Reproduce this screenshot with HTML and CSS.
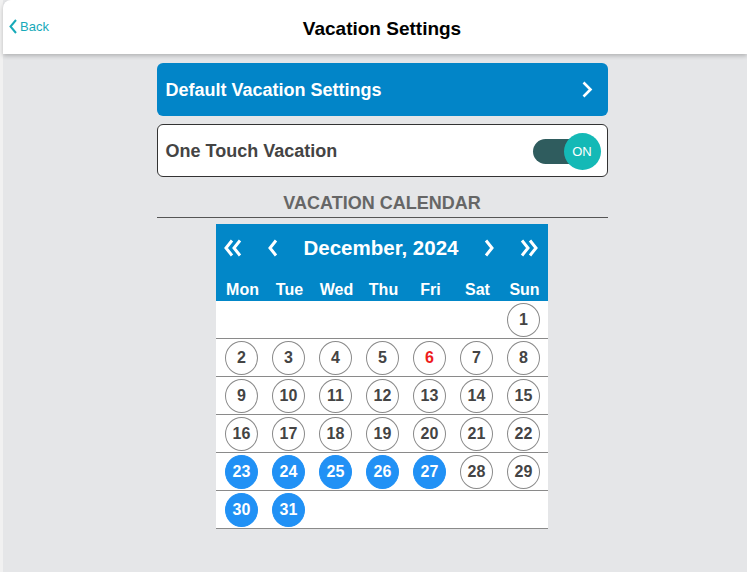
FILE: index.html
```html
<!DOCTYPE html>
<html lang="en">
<head>
<meta charset="utf-8">
<title>Vacation Settings</title>
<link rel="stylesheet" href="styles.css">
</head>
<body>
<div class="app">
  <header class="topbar">
    <a class="back" href="#">
      <svg class="back-icon" width="8" height="15" viewBox="0 0 8 15"><polyline points="7,1 1.5,7.5 7,14" fill="none" stroke="#17aab9" stroke-width="2"/></svg>
      <span>Back</span>
    </a>
    <h1 class="title">Vacation Settings</h1>
    <span class="spacer"></span>
  </header>

  <main class="content">
    <a class="nav-btn" href="#">
      <span>Default Vacation Settings</span>
      <svg width="12" height="17" viewBox="0 0 12 17"><polyline points="2.5,1.5 9.5,8.5 2.5,15.5" fill="none" stroke="#fff" stroke-width="2.6"/></svg>
    </a>

    <div class="toggle-row">
      <span>One Touch Vacation</span>
      <div class="switch">
        <span class="track"></span>
        <span class="knob">ON</span>
      </div>
    </div>

    <h2 class="section-title">VACATION CALENDAR</h2>

    <div class="calendar">
      <div class="cal-head">
        <div class="month-row">
          <svg width="18" height="18" viewBox="0 0 18 18"><polyline points="8,1.5 2,9 8,16.5" fill="none" stroke="#fff" stroke-width="3"/><polyline points="16,1.5 10,9 16,16.5" fill="none" stroke="#fff" stroke-width="3"/></svg>
          <svg width="11" height="18" viewBox="0 0 11 18"><polyline points="9,1.5 3,9 9,16.5" fill="none" stroke="#fff" stroke-width="3"/></svg>
          <span class="month">December, 2024</span>
          <svg width="11" height="18" viewBox="0 0 11 18"><polyline points="2,1.5 8,9 2,16.5" fill="none" stroke="#fff" stroke-width="3"/></svg>
          <svg width="18" height="18" viewBox="0 0 18 18"><polyline points="2,1.5 8,9 2,16.5" fill="none" stroke="#fff" stroke-width="3"/><polyline points="10,1.5 16,9 10,16.5" fill="none" stroke="#fff" stroke-width="3"/></svg>
        </div>
        <div class="week-row">
          <span>Mon</span><span>Tue</span><span>Wed</span><span>Thu</span><span>Fri</span><span>Sat</span><span>Sun</span>
        </div>
      </div>
      <div class="week">
        <span class="cell"></span><span class="cell"></span><span class="cell"></span><span class="cell"></span><span class="cell"></span><span class="cell"></span>
        <span class="cell"><span class="day">1</span></span>
      </div>
      <div class="week">
        <span class="cell"><span class="day">2</span></span>
        <span class="cell"><span class="day">3</span></span>
        <span class="cell"><span class="day">4</span></span>
        <span class="cell"><span class="day">5</span></span>
        <span class="cell"><span class="day today">6</span></span>
        <span class="cell"><span class="day">7</span></span>
        <span class="cell"><span class="day">8</span></span>
      </div>
      <div class="week">
        <span class="cell"><span class="day">9</span></span>
        <span class="cell"><span class="day">10</span></span>
        <span class="cell"><span class="day">11</span></span>
        <span class="cell"><span class="day">12</span></span>
        <span class="cell"><span class="day">13</span></span>
        <span class="cell"><span class="day">14</span></span>
        <span class="cell"><span class="day">15</span></span>
      </div>
      <div class="week">
        <span class="cell"><span class="day">16</span></span>
        <span class="cell"><span class="day">17</span></span>
        <span class="cell"><span class="day">18</span></span>
        <span class="cell"><span class="day">19</span></span>
        <span class="cell"><span class="day">20</span></span>
        <span class="cell"><span class="day">21</span></span>
        <span class="cell"><span class="day">22</span></span>
      </div>
      <div class="week">
        <span class="cell"><span class="day selected">23</span></span>
        <span class="cell"><span class="day selected">24</span></span>
        <span class="cell"><span class="day selected">25</span></span>
        <span class="cell"><span class="day selected">26</span></span>
        <span class="cell"><span class="day selected">27</span></span>
        <span class="cell"><span class="day">28</span></span>
        <span class="cell"><span class="day">29</span></span>
      </div>
      <div class="week">
        <span class="cell"><span class="day selected">30</span></span>
        <span class="cell"><span class="day selected">31</span></span>
        <span class="cell"></span><span class="cell"></span><span class="cell"></span><span class="cell"></span><span class="cell"></span>
      </div>
    </div>
  </main>
</div>
</body>
</html>
```

FILE: styles.css
```css
* { box-sizing: border-box; }

html, body {
  margin: 0;
  height: 100%;
}

body {
  background: #f1f1f1;
  font-family: "Liberation Sans", Arial, sans-serif;
  padding-left: 3px;
}

.app {
  background: #e5e6e8;
  min-height: 100%;
}

.topbar {
  height: 54px;
  background: #fff;
  border-top-left-radius: 8px;
  box-shadow: 0 2px 4px rgba(0, 0, 0, 0.22);
  display: grid;
  grid-template-columns: 1fr auto 1fr;
  align-items: center;
  padding: 3px 0 0 14px;
  position: relative;
}

.back {
  justify-self: start;
  margin-left: -8px;
  margin-top: -4px;
  display: flex;
  align-items: center;
  gap: 3px;
  color: #17aab9;
  text-decoration: none;
  font-size: 13px;
}

.back-icon { display: block; }

.title {
  margin: 0;
  font-size: 19px;
  font-weight: bold;
  color: #000;
}

.content {
  padding: 9px 0 0 14px;
  display: flex;
  flex-direction: column;
  align-items: center;
}

.nav-btn,
.toggle-row,
.section-title {
  width: 451px;
}

.nav-btn {
  height: 53px;
  background: #0285c8;
  border-radius: 6px;
  display: flex;
  align-items: center;
  justify-content: space-between;
  padding: 2px 15px 0 9px;
  color: #fff;
  text-decoration: none;
  font-size: 18px;
  font-weight: bold;
}

.nav-btn svg { display: block; margin-top: -2px; }

.toggle-row {
  margin-top: 8px;
  height: 53px;
  background: #fff;
  border: 1px solid #333;
  border-radius: 6px;
  display: flex;
  align-items: center;
  justify-content: space-between;
  padding: 2px 6px 0 8px;
  font-size: 18px;
  font-weight: bold;
  color: #444;
}

.switch {
  position: relative;
  width: 68px;
  height: 37px;
  display: flex;
  align-items: center;
}

.track {
  display: block;
  width: 57px;
  height: 25px;
  border-radius: 13px;
  background: #2f5c5e;
}

.knob {
  position: absolute;
  right: 0;
  top: 0;
  width: 37px;
  height: 37px;
  border-radius: 50%;
  background: #14b9b6;
  color: #fff;
  font-size: 13px;
  font-weight: normal;
  display: flex;
  align-items: center;
  justify-content: center;
}

.section-title {
  margin: 16px 0 0;
  font-size: 18px;
  line-height: 21px;
  font-weight: bold;
  color: #666;
  text-align: center;
  padding-bottom: 3px;
  border-bottom: 1px solid #555;
}

.calendar {
  margin-top: 6px;
  width: 332px;
  background: #fff;
}

.cal-head {
  background: #0287c8;
  color: #fff;
  font-weight: bold;
}

.month-row {
  height: 47px;
  display: flex;
  align-items: center;
  justify-content: space-between;
  padding: 0 10px 0 8px;
}

.month-row svg { display: block; }

.month {
  font-size: 20.5px;
}

.week-row {
  height: 30px;
  padding: 7px 0 0 3px;
  display: grid;
  grid-template-columns: repeat(7, 1fr);
  align-items: center;
  font-size: 16px;
  text-align: center;
}

.week {
  display: grid;
  grid-template-columns: repeat(7, 1fr);
  height: 38px;
  padding: 0 1px 0 2px;
  border-bottom: 1px solid #8a8a8a;
}

.cell {
  display: flex;
  align-items: center;
  justify-content: center;
}

.day {
  width: 33px;
  height: 34px;
  border-radius: 50%;
  border: 1px solid #8a8a8a;
  display: flex;
  align-items: center;
  justify-content: center;
  font-size: 16px;
  font-weight: bold;
  color: #444;
}

.day.today { color: #ee1c1c; }

.day.selected {
  background: #2191f5;
  border-color: #2191f5;
  color: #fff;
}
```
